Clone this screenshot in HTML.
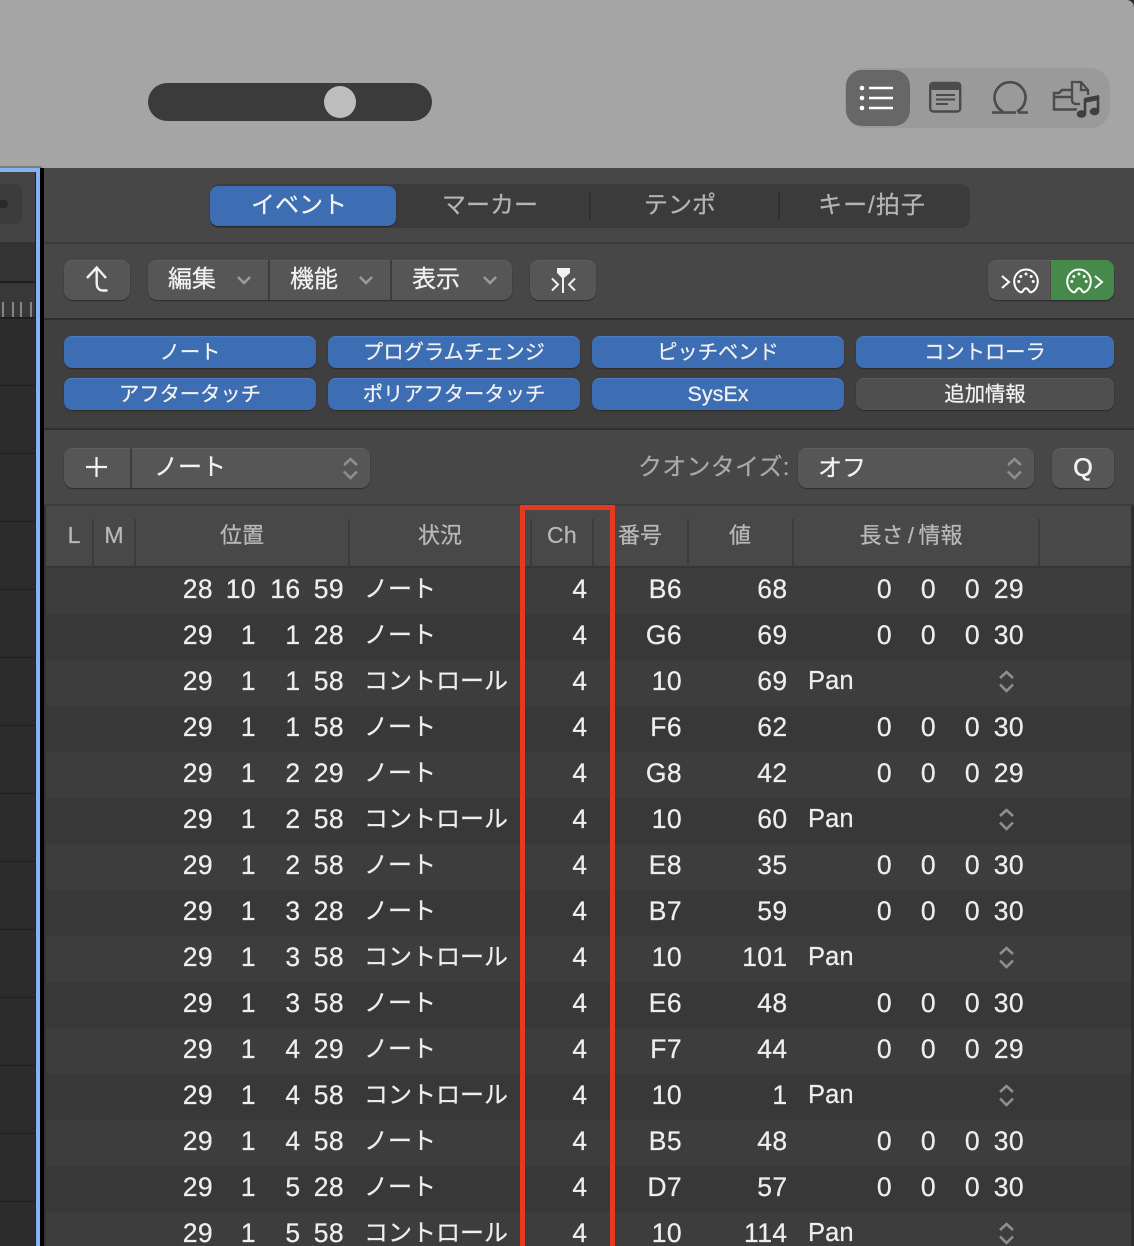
<!DOCTYPE html>
<html lang="ja"><head><meta charset="utf-8"><title>Event List</title>
<style>
html,body{margin:0;padding:0;background:#474747}
#p{position:relative;width:1134px;height:1246px;overflow:hidden;background:#474747;font-family:"Liberation Sans","Noto Sans CJK JP",sans-serif;color:#eee;-webkit-text-stroke:.25px}
#p div,#p span,#p svg{position:absolute;display:block}
.b{border-radius:9px;background:#565656;box-shadow:0 1px 1px #2c2c2c,inset 0 1px 0 #5f5f5f}
.f{height:32px;line-height:35px;border-radius:8px;background:#3d6db3;box-shadow:0 1px 1px #2a2a2a,inset 0 1px 0 #4a7abf;text-align:center;font-size:20.3px;color:#f2f2f2;white-space:nowrap}
.t{top:184px;height:42px;line-height:43px;font-size:24px;text-align:center;color:#b4b4b4;white-space:nowrap}
.h{top:519px;width:2px;height:47px;background:#3c3c3c}
.ht{top:505px;height:61px;line-height:61px;font-size:22px;color:#b8b8b8;text-align:center;white-space:nowrap}
.r{left:46px;width:1085px;height:46px;line-height:43px;font-size:26.5px;letter-spacing:.4px;color:#eee;white-space:nowrap}
.r.o{background:#3d3d3d}.r.e{background:#383838}
.r span{top:0;text-align:right}
.a{right:918px}.c{right:875px}.d{right:830.500px}.g{right:787px}
.s{left:318px;font-size:24px;letter-spacing:0;text-align:left!important}
.n{right:543.500px}.m{right:449px}.v{right:343.500px}
.q{left:762px;font-size:25.5px;letter-spacing:.1px;text-align:left!important}
.w{right:239px}.x{right:195px}.y{right:151px}.z{right:107px}
.k{left:952px;top:9px;width:17px;height:24px}
</style></head><body><div id="p">
<svg width="0" height="0" style="left:0;top:0"><defs>
<symbol id="ud" viewBox="0 0 17 24"><path d="M2 9 8.500 3 15 9M2 15.500 8.500 22 15 15.500" fill="none" stroke="#8e8e8e" stroke-width="2.600"/></symbol>
<symbol id="mi" viewBox="0 0 26 26"><path d="M7.800 24.300C3.800 22.800 1.200 18.300 1.200 13.300A11.800 11.800 0 0 1 24.800 13.300C24.800 18.300 22.200 22.800 18.200 24.300C15.800 25 16 20.300 13 20.300C10 20.300 10.200 25 7.800 24.300Z" fill="none" stroke="#fff" stroke-width="2"/><g fill="#fff"><circle cx="13" cy="6" r="1.500"/><circle cx="7.800" cy="8.500" r="1.500"/><circle cx="18.200" cy="8.500" r="1.500"/><circle cx="5.800" cy="13.500" r="1.500"/><circle cx="20.200" cy="13.500" r="1.500"/></g></symbol>
</defs></svg>

<!-- title bar -->
<div style="left:0;top:0;width:1134px;height:168px;background:#a5a5a5"></div>
<div style="left:1126px;top:0;width:8px;height:8px;background:#2a2a2a;clip-path:path('M0 0C5 0 8 3 8 8V0Z')"></div>
<div style="left:148px;top:83px;width:284px;height:38px;border-radius:19px;background:#3b3b3b"></div>
<div style="left:324px;top:86px;width:32px;height:32px;border-radius:16px;background:#bdbdbd"></div>
<div style="left:845px;top:68px;width:265px;height:60px;border-radius:20px;background:#9a9a9a"></div>
<div style="left:846px;top:70px;width:64px;height:56px;border-radius:16px;background:#676767"></div>
<svg style="left:845px;top:68px" width="265" height="60" viewBox="845 68 265 60">
 <g fill="#fff"><circle cx="862" cy="88" r="2.300"/><circle cx="862" cy="98" r="2.300"/><circle cx="862" cy="108" r="2.300"/></g>
 <path d="M869 88H893M869 98H893M869 108H893" stroke="#fff" stroke-width="2.500" fill="none"/>
 <rect x="930.200" y="83" width="30" height="28.500" rx="3" fill="none" stroke="#4b4b4b" stroke-width="2.400"/>
 <rect x="930" y="82" width="31" height="8" rx="3" fill="#4b4b4b"/>
 <path d="M936 95H955M936 99.500H955M936 104H948" stroke="#4b4b4b" stroke-width="2" fill="none"/>
 <path d="M992 112.500H1016M1018 112.500H1028" stroke="#4b4b4b" stroke-width="2.400" fill="none"/>
 <path d="M1003 111.500A15.500 15.500 0 1 1 1017 111.500" fill="none" stroke="#4b4b4b" stroke-width="2.600"/>
 <path d="M1071 90H1062L1059 93H1054V109.500H1077M1054 97H1071" fill="none" stroke="#4b4b4b" stroke-width="2.400"/>
 <path d="M1072 100V82H1081L1088 90V95M1081 82V90H1088M1072 100C1072 103 1074 104 1077 104H1080" fill="none" stroke="#4b4b4b" stroke-width="2.300"/>
 <path d="M1084 98L1099 95V100L1084 103Z" fill="#3f3f3f"/>
 <path d="M1085 99V113M1098 96V111" fill="none" stroke="#3f3f3f" stroke-width="2.600"/>
 <ellipse cx="1081.500" cy="114" rx="4.800" ry="3.800" fill="#3f3f3f"/><ellipse cx="1094.500" cy="111.500" rx="4.800" ry="3.800" fill="#3f3f3f"/>
</svg>

<!-- left panel -->
<div style="left:0;top:168px;width:42px;height:1078px;background:#2c2c2c"></div>
<div style="left:0;top:172px;width:36px;height:70px;background:#444"></div>
<div style="left:0;top:184px;width:22px;height:40px;background:#3c3c3c;border-radius:0 8px 8px 0"></div>
<div style="left:0;top:200px;width:8px;height:8px;background:#2a2a2a;border-radius:0 4px 4px 0"></div>
<div style="left:0;top:242px;width:36px;height:39px;background:#333"></div>
<div style="left:0;top:281px;width:36px;height:2px;background:#1f1f1f"></div>
<div style="left:0;top:283px;width:36px;height:34px;background:#383838"></div>
<div style="left:2px;top:302px;width:2px;height:16px;background:#858585"></div>
<div style="left:12px;top:302px;width:2px;height:16px;background:#858585"></div>
<div style="left:20px;top:302px;width:2px;height:16px;background:#858585"></div>
<div style="left:30px;top:302px;width:2px;height:16px;background:#858585"></div>
<div style="left:0;top:317px;width:36px;height:2px;background:#1f1f1f"></div>
<div style="left:0;top:385px;width:36px;height:1px;background:#1f1f1f"></div>
<div style="left:0;top:453px;width:36px;height:1px;background:#1f1f1f"></div>
<div style="left:0;top:521px;width:36px;height:1px;background:#1f1f1f"></div>
<div style="left:0;top:589px;width:36px;height:1px;background:#1f1f1f"></div>
<div style="left:0;top:657px;width:36px;height:1px;background:#1f1f1f"></div>
<div style="left:0;top:725px;width:36px;height:1px;background:#1f1f1f"></div>
<div style="left:0;top:793px;width:36px;height:1px;background:#1f1f1f"></div>
<div style="left:0;top:861px;width:36px;height:1px;background:#1f1f1f"></div>
<div style="left:0;top:929px;width:36px;height:1px;background:#1f1f1f"></div>
<div style="left:0;top:997px;width:36px;height:1px;background:#1f1f1f"></div>
<div style="left:0;top:1065px;width:36px;height:1px;background:#1f1f1f"></div>
<div style="left:0;top:1133px;width:36px;height:1px;background:#1f1f1f"></div>
<div style="left:0;top:1201px;width:36px;height:1px;background:#1f1f1f"></div>
<div style="left:35px;top:172px;width:1px;height:1074px;background:#222"></div>
<div style="left:0;top:166px;width:42px;height:2px;background:#7c7c7c"></div>
<div style="left:0;top:168px;width:40px;height:4px;background:#86b2ef"></div>
<div style="left:36px;top:168px;width:4px;height:1078px;background:#86b2ef"></div>
<div style="left:40px;top:168px;width:4px;height:1078px;background:#000"></div>

<!-- tabs -->
<div style="left:210px;top:184px;width:760px;height:44px;border-radius:10px;background:#3b3b3b"></div>
<div style="left:210px;top:186px;width:186px;height:40px;border-radius:8px;background:#3d6db3;box-shadow:0 1px 1px #222"></div>
<div class="t" style="left:210px;width:178px;color:#f4f4f4">イベント</div>
<div class="t" style="left:395px;width:190px">マーカー</div>
<div class="t" style="left:590px;width:180px">テンポ</div>
<div class="t" style="left:780px;width:184px;letter-spacing:1px">キー/拍子</div>
<div style="left:589px;top:192px;width:2px;height:28px;background:#2f2f2f"></div>
<div style="left:778px;top:192px;width:2px;height:28px;background:#2f2f2f"></div>
<div style="left:44px;top:242px;width:1090px;height:2px;background:#3c3c3c"></div>

<!-- toolbar -->
<div class="b" style="left:64px;top:260px;width:66px;height:40px"></div>
<svg style="left:64px;top:260px" width="66" height="40"><path d="M23 18 32.700 7.500 42 18M32.700 8V23C32.700 28 35 30.500 39 30.500H43.500" fill="none" stroke="#f2f2f2" stroke-width="2.400"/></svg>
<div class="b" style="left:148px;top:260px;width:364px;height:40px"></div>
<div style="left:268px;top:260px;width:2px;height:40px;background:#3e3e3e"></div>
<div style="left:390px;top:260px;width:2px;height:40px;background:#3e3e3e"></div>
<div style="left:168px;top:260px;height:38px;line-height:40px;font-size:24px;color:#f2f2f2">編集</div>
<div style="left:290px;top:260px;height:38px;line-height:40px;font-size:24px;color:#f2f2f2">機能</div>
<div style="left:412px;top:260px;height:38px;line-height:40px;font-size:24px;color:#f2f2f2">表示</div>
<svg style="left:148px;top:260px" width="364" height="40"><path d="M90 17 96 23 102 17M212 17 218 23 224 17M336 17 342 23 348 17" fill="none" stroke="#999" stroke-width="2.600"/></svg>
<div class="b" style="left:530px;top:260px;width:66px;height:40px"></div>
<svg style="left:530px;top:260px" width="66" height="40"><path d="M27 8H40V13L34 18V33H32V18L27 13Z" fill="#f2f2f2"/><path d="M22 18.500 28 24.500 22 30.500M45 18.500 39 24.500 45 30.500" fill="none" stroke="#f2f2f2" stroke-width="2"/></svg>
<div class="b" style="left:988px;top:260px;width:126px;height:40px"></div>
<div style="left:1051px;top:260px;width:63px;height:40px;border-radius:0 9px 9px 0;background:#458a4a;box-shadow:0 1px 1px #2c2c2c"></div>
<svg style="left:1013px;top:268px" width="26" height="26"><use href="#mi"/></svg>
<svg style="left:1066px;top:268px" width="26" height="26"><use href="#mi"/></svg>
<svg style="left:988px;top:260px" width="126" height="40"><path d="M14 16 21 22 14 28M107 16 114 22 107 28" fill="none" stroke="#fff" stroke-width="2"/></svg>

<!-- filter area -->
<div style="left:44px;top:318px;width:1090px;height:112px;background:#3f3f3f"></div>
<div style="left:44px;top:318px;width:1090px;height:2px;background:#303030"></div>
<div style="left:44px;top:428px;width:1090px;height:2px;background:#303030"></div>
<div class="f" style="left:64px;top:336px;width:252px">ノート</div>
<div class="f" style="left:328px;top:336px;width:252px">プログラムチェンジ</div>
<div class="f" style="left:592px;top:336px;width:252px">ピッチベンド</div>
<div class="f" style="left:856px;top:336px;width:258px">コントローラ</div>
<div class="f" style="left:64px;top:378px;width:252px">アフタータッチ</div>
<div class="f" style="left:328px;top:378px;width:252px">ポリアフタータッチ</div>
<div class="f" style="left:592px;top:378px;width:252px;font-size:21.5px;line-height:33px">SysEx</div>
<div class="f" style="left:856px;top:378px;width:258px;background:#4f4f4f;box-shadow:0 1px 1px #2a2a2a,inset 0 1px 0 #5a5a5a">追加情報</div>

<!-- selector row -->
<div class="b" style="left:64px;top:448px;width:306px;height:40px"></div>
<div style="left:130px;top:448px;width:2px;height:40px;background:#3e3e3e"></div>
<svg style="left:64px;top:448px" width="66" height="40"><path d="M32.500 9V29M22 19H43" stroke="#f2f2f2" stroke-width="2.200" fill="none"/></svg>
<div style="left:154px;top:448px;height:38px;line-height:40px;font-size:24px;color:#f2f2f2">ノート</div>
<svg style="left:342px;top:456px" width="17" height="24"><use href="#ud"/></svg>
<div style="left:638px;top:448px;height:38px;line-height:40px;font-size:24px;color:#a8a8a8;white-space:nowrap;letter-spacing:.25px">クオンタイズ:</div>
<div class="b" style="left:798px;top:448px;width:236px;height:40px"></div>
<div style="left:818px;top:448px;height:38px;line-height:41px;font-size:24px;color:#f2f2f2">オフ</div>
<svg style="left:1006px;top:456px" width="17" height="24"><use href="#ud"/></svg>
<div class="b" style="left:1052px;top:448px;width:62px;height:40px;line-height:40px;text-align:center;font-size:25px;color:#f2f2f2;-webkit-text-stroke:.6px">Q</div>

<!-- header -->
<div style="left:44px;top:504px;width:1090px;height:2px;background:#3c3c3c"></div>
<div style="left:46px;top:506px;width:1085px;height:60px;background:#484848"></div>
<div style="left:44px;top:506px;width:2px;height:740px;background:#333"></div>
<div style="left:46px;top:566px;width:1085px;height:2px;background:#363636"></div>
<div class="h" style="left:92px"></div><div class="h" style="left:134px"></div><div class="h" style="left:348px"></div><div class="h" style="left:530px"></div><div class="h" style="left:592px"></div><div class="h" style="left:687px"></div><div class="h" style="left:792px"></div><div class="h" style="left:1038px"></div>
<div class="ht" style="left:64px;width:20px;font-size:23px">L</div>
<div class="ht" style="left:100px;width:28px;font-size:23px">M</div>
<div class="ht" style="left:135px;width:214px">位置</div>
<div class="ht" style="left:349px;width:182px">状況</div>
<div class="ht" style="left:532px;width:60px;font-size:23px;letter-spacing:.3px">Ch</div>
<div class="ht" style="left:610px;width:60px">番号</div>
<div class="ht" style="left:710px;width:60px">値</div>
<div class="ht" style="left:793px;width:236px">長さ&#8201;/&#8201;情報</div>

<!-- rows -->
<div style="left:1131px;top:506px;width:3px;height:740px;background:#2e2e2e"></div>
<div class="r o" style="top:568px"><span class="a">28</span><span class="c">10</span><span class="d">16</span><span class="g">59</span><span class="s">ノート</span><span class="n">4</span><span class="m">B6</span><span class="v">68</span><span class="w">0</span><span class="x">0</span><span class="y">0</span><span class="z">29</span></div>
<div class="r e" style="top:614px"><span class="a">29</span><span class="c">1</span><span class="d">1</span><span class="g">28</span><span class="s">ノート</span><span class="n">4</span><span class="m">G6</span><span class="v">69</span><span class="w">0</span><span class="x">0</span><span class="y">0</span><span class="z">30</span></div>
<div class="r o" style="top:660px"><span class="a">29</span><span class="c">1</span><span class="d">1</span><span class="g">58</span><span class="s">コントロール</span><span class="n">4</span><span class="m">10</span><span class="v">69</span><span class="q">Pan</span><svg class="k"><use href="#ud"/></svg></div>
<div class="r e" style="top:706px"><span class="a">29</span><span class="c">1</span><span class="d">1</span><span class="g">58</span><span class="s">ノート</span><span class="n">4</span><span class="m">F6</span><span class="v">62</span><span class="w">0</span><span class="x">0</span><span class="y">0</span><span class="z">30</span></div>
<div class="r o" style="top:752px"><span class="a">29</span><span class="c">1</span><span class="d">2</span><span class="g">29</span><span class="s">ノート</span><span class="n">4</span><span class="m">G8</span><span class="v">42</span><span class="w">0</span><span class="x">0</span><span class="y">0</span><span class="z">29</span></div>
<div class="r e" style="top:798px"><span class="a">29</span><span class="c">1</span><span class="d">2</span><span class="g">58</span><span class="s">コントロール</span><span class="n">4</span><span class="m">10</span><span class="v">60</span><span class="q">Pan</span><svg class="k"><use href="#ud"/></svg></div>
<div class="r o" style="top:844px"><span class="a">29</span><span class="c">1</span><span class="d">2</span><span class="g">58</span><span class="s">ノート</span><span class="n">4</span><span class="m">E8</span><span class="v">35</span><span class="w">0</span><span class="x">0</span><span class="y">0</span><span class="z">30</span></div>
<div class="r e" style="top:890px"><span class="a">29</span><span class="c">1</span><span class="d">3</span><span class="g">28</span><span class="s">ノート</span><span class="n">4</span><span class="m">B7</span><span class="v">59</span><span class="w">0</span><span class="x">0</span><span class="y">0</span><span class="z">30</span></div>
<div class="r o" style="top:936px"><span class="a">29</span><span class="c">1</span><span class="d">3</span><span class="g">58</span><span class="s">コントロール</span><span class="n">4</span><span class="m">10</span><span class="v">101</span><span class="q">Pan</span><svg class="k"><use href="#ud"/></svg></div>
<div class="r e" style="top:982px"><span class="a">29</span><span class="c">1</span><span class="d">3</span><span class="g">58</span><span class="s">ノート</span><span class="n">4</span><span class="m">E6</span><span class="v">48</span><span class="w">0</span><span class="x">0</span><span class="y">0</span><span class="z">30</span></div>
<div class="r o" style="top:1028px"><span class="a">29</span><span class="c">1</span><span class="d">4</span><span class="g">29</span><span class="s">ノート</span><span class="n">4</span><span class="m">F7</span><span class="v">44</span><span class="w">0</span><span class="x">0</span><span class="y">0</span><span class="z">29</span></div>
<div class="r e" style="top:1074px"><span class="a">29</span><span class="c">1</span><span class="d">4</span><span class="g">58</span><span class="s">コントロール</span><span class="n">4</span><span class="m">10</span><span class="v">1</span><span class="q">Pan</span><svg class="k"><use href="#ud"/></svg></div>
<div class="r o" style="top:1120px"><span class="a">29</span><span class="c">1</span><span class="d">4</span><span class="g">58</span><span class="s">ノート</span><span class="n">4</span><span class="m">B5</span><span class="v">48</span><span class="w">0</span><span class="x">0</span><span class="y">0</span><span class="z">30</span></div>
<div class="r e" style="top:1166px"><span class="a">29</span><span class="c">1</span><span class="d">5</span><span class="g">28</span><span class="s">ノート</span><span class="n">4</span><span class="m">D7</span><span class="v">57</span><span class="w">0</span><span class="x">0</span><span class="y">0</span><span class="z">30</span></div>
<div class="r o" style="top:1212px"><span class="a">29</span><span class="c">1</span><span class="d">5</span><span class="g">58</span><span class="s">コントロール</span><span class="n">4</span><span class="m">10</span><span class="v">114</span><span class="q">Pan</span><svg class="k"><use href="#ud"/></svg></div>

<!-- red highlight -->
<div style="left:520px;top:505px;width:85px;height:760px;border:5px solid #e63a20"></div>
</div></body></html>
